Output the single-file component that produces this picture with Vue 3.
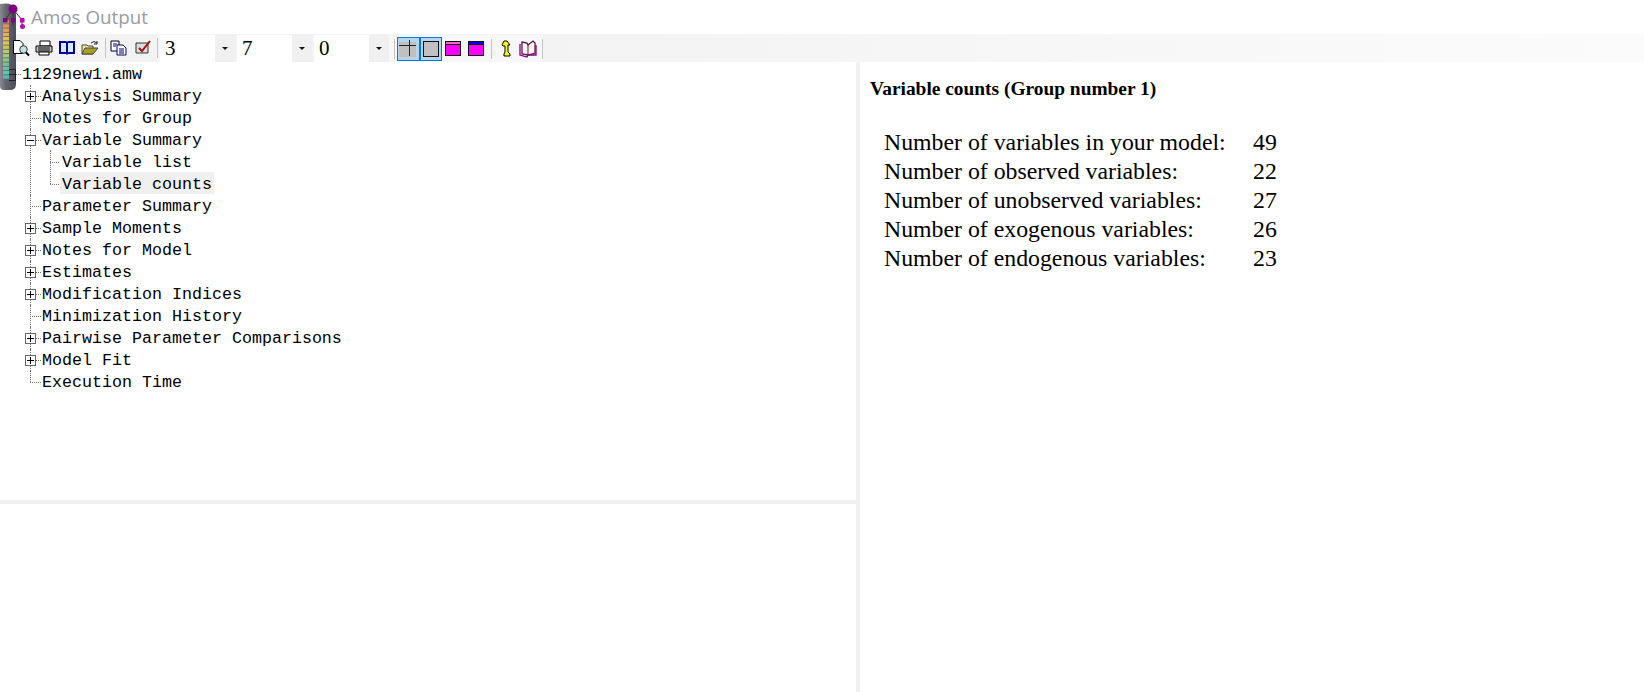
<script setup>
const rows = [
  { label: 'Analysis Summary', box: 'plus' },
  { label: 'Notes for Group' },
  { label: 'Variable Summary', box: 'minus', children: ['Variable list', 'Variable counts'] },
  { label: 'Parameter Summary' },
  { label: 'Sample Moments', box: 'plus' },
  { label: 'Notes for Model', box: 'plus' },
  { label: 'Estimates', box: 'plus' },
  { label: 'Modification Indices', box: 'plus' },
  { label: 'Minimization History' },
  { label: 'Pairwise Parameter Comparisons', box: 'plus' },
  { label: 'Model Fit', box: 'plus' },
  { label: 'Execution Time' }
]
const counts = [
  ['Number of variables in your model:', 49],
  ['Number of observed variables:', 22],
  ['Number of unobserved variables:', 27],
  ['Number of exogenous variables:', 26],
  ['Number of endogenous variables:', 23]
]
const leds = ['#d88a70','#e09060','#e8a050','#e8b050','#e0c050','#d8c850','#c8c850','#b8cc60','#a0cc70','#88cc80','#70c890','#60c8a0','#58c8b0','#50c0b0']
</script>

<template>
  <div class="page">
    <div class="logo">
      <svg width="30" height="92" viewBox="0 0 30 92">
        <defs>
          <linearGradient id="body" x1="0" x2="1" y1="0" y2="0">
            <stop offset="0" stop-color="#8a8a90"/>
            <stop offset=".35" stop-color="#666670"/>
            <stop offset="1" stop-color="#4c4c58"/>
          </linearGradient>
        </defs>
        <path d="M0 4 Q6 3 10 4 Q15 8 16 14 V84 Q16 90 10 90 H4 Q0 90 0 86 Z" fill="url(#body)"/>
        <rect v-for="(c, i) in leds" :key="i" x="3" :y="20 + i * 4.25" width="6" height="3.4" :fill="c"/>
        <path d="M13 9 L22 20 V26 M13 9 V26 M13 9 L5 20" stroke="#333" fill="none"/>
        <circle cx="13" cy="9" r="4.5" fill="#800080"/>
        <rect x="11" y="18" width="4.5" height="4.5" fill="#800080"/>
        <rect x="3" y="18" width="4.5" height="4.5" fill="#800080"/>
        <rect x="20" y="18" width="4.5" height="4.5" fill="#c000c0"/>
        <circle cx="22.5" cy="26.5" r="2.5" fill="#c000c0"/>
        <path d="M9 69.5 H15.5 V80.5 H9 M9 74.5 H15" fill="none" stroke="#222"/>
      </svg>
    </div>

    <div class="title">Amos Output</div>

    <div class="toolbar">
      <div class="group g1">
        <svg class="ic" viewBox="0 0 18 18"><path d="M1.5 1.5 H8 L11 4.5 V14.5 H1.5 Z" fill="#fff" stroke="#000"/><circle cx="11.5" cy="10.5" r="3.8" fill="#bfe4e4" stroke="#333"/><path d="M14 13.5 L17 16.5" stroke="#000" stroke-width="2"/></svg>
        <svg class="ic" viewBox="0 0 18 18"><path d="M5 2 H15 V7 H5Z" fill="#fff" stroke="#000"/><path d="M1 7 H17 V13 H1Z" fill="#c8c8c8" stroke="#000"/><path d="M4 13 H14 V16 H4Z" fill="#fff" stroke="#000"/><path d="M3 9 H15 M3 11 H15" stroke="#000"/></svg>
        <svg class="ic" viewBox="0 0 18 18"><path d="M1 2 H8 Q9 3 10 2 H17 V15 H10 L9 16 L8 15 H1Z" fill="#00009c"/><path d="M3 4 H8 V13 H3Z M10 4 H15 V13 H10Z" fill="#d8e8ff"/></svg>
        <svg class="ic" viewBox="0 0 18 18"><path d="M1 6 H6 L7 7 H12 V15 H1Z" fill="#ffe890" stroke="#444"/><path d="M1 15 L4 9 H17 L12 15Z" fill="#a8a020" stroke="#444"/><path d="M10 4 Q13 1 16 4 M16 2 V5 H13" fill="none" stroke="#222"/></svg>
        <i class="sep"></i>
        <svg class="ic" viewBox="0 0 18 18"><path d="M1 2 H9 V12 H1Z" fill="#fff" stroke="#000"/><path d="M7 6 H13 L16 9 V16 H7Z" fill="#fff" stroke="#00006c"/><path d="M9 10 H14 M9 12 H14 M9 14 H14 M3 5 H7 M3 7 H6" stroke="#00006c"/></svg>
        <svg class="ic chk" viewBox="0 0 18 18"><path d="M1 4 H13 V14 H1Z" fill="#ddd" stroke="#333"/><path d="M4 9 L7 12 L15 2" fill="none" stroke="#a01010" stroke-width="2"/></svg>
        <i class="sep sep2"></i>
      </div>
      <template v-for="v in [3, 7, 0]" :key="v">
        <div class="combo"><span>{{ v }}</span></div>
        <div class="drop"><i></i></div>
      </template>
      <div class="group g2">
        <i class="sep first"></i>
        <span class="btn on"><svg viewBox="0 0 18 18"><rect x="0" y="2" width="17" height="15" fill="#c0c0c0"/><path d="M0 5.5 H17 M10.5 0 V16" stroke="#222" stroke-width="1"/></svg></span>
        <span class="btn on"><svg viewBox="0 0 18 18"><rect x="1.5" y="1.5" width="15" height="15" fill="#c0c0c0" stroke="#111" stroke-width="1"/></svg></span>
        <svg class="ic mag" viewBox="0 0 16 15"><rect x=".5" y=".5" width="15" height="14" fill="#ff00ff" stroke="#111"/><rect x="1" y="1" width="14" height="2.5" fill="#ff66cc"/><path d="M1 3.5 H15" stroke="#111"/></svg>
        <svg class="ic mag" viewBox="0 0 16 15"><rect x=".5" y=".5" width="15" height="14" fill="#ff00ff" stroke="#111"/><rect x="1" y="1" width="14" height="2.5" fill="#0000ff"/><path d="M1 3.5 H15" stroke="#111"/></svg>
        <i class="sep"></i>
        <svg class="ic up" viewBox="0 0 18 18"><path d="M6 1 H9 L12 5 H10 V12 L12 14 V16 H6 V14 L7 12 V6 H5 L4 5 Z" fill="#ffff00" stroke="#000"/></svg>
        <svg class="ic book" viewBox="0 0 18 18"><path d="M3 2 L8 3 L9 5 L14 1 L16 3 V13 L9 15 L3 14 Z" fill="#fbf8e8" stroke="#601060" stroke-width="1.3"/><path d="M1 4 V15 L8 17 L9 15 L17 15 V5" fill="none" stroke="#800080" stroke-width="1.3"/><path d="M9 5 V15" stroke="#601060"/></svg>
        <i class="sep end"></i>
      </div>
    </div>

    <div class="panes">
      <div class="left">
        <div class="tree">
          <div class="root">1129new1.amw</div>
          <ul class="list">
            <li v-for="r in rows" :key="r.label" class="item">
              <div class="row">
                <i v-if="r.box" class="box" :class="r.box"></i>
                <span>{{ r.label }}</span>
              </div>
              <ul v-if="r.children" class="sub">
                <li v-for="(c, i) in r.children" :key="c" class="subitem">
                  <span :class="{ selected: i === 1 }">{{ c }}</span>
                </li>
              </ul>
            </li>
          </ul>
        </div>
        <div class="lower"></div>
      </div>
      <div class="right">
        <h1>Variable counts (Group number 1)</h1>
        <div class="table">
          <template v-for="c in counts" :key="c[0]">
            <span>{{ c[0] }}</span><span>{{ c[1] }}</span>
          </template>
        </div>
      </div>
    </div>
  </div>
</template>

<style scoped>
.page { position: relative; width: 1644px; height: 692px; background: #fff; overflow: hidden; display: flex; flex-direction: column; }
.logo { position: absolute; left: 0; top: 0; z-index: 3; line-height: 0; }
.title { height: 34px; padding: 6px 0 0 31px; box-sizing: border-box; font: 18.8px/22px "Open Sans", sans-serif; color: #9a9aa2; }
.toolbar { height: 28px; display: flex; align-items: stretch; background: linear-gradient(90deg, #f3f3f3, #f3f3f3 34%, #fbfbfb); padding-top: 1px; box-sizing: border-box; }
.group { display: flex; align-items: center; }
.g1 { width: 160px; padding: 0 0 2px 12px; box-sizing: border-box; gap: 5px; position: relative; z-index: 4; }
.ic { width: 18px; height: 18px; flex: none; }
.sep { width: 1px; height: 20px; background: #c4c4c4; flex: none; margin: 0 -1px 0 1px; }
.sep2 { margin-left: -1px; }
.chk { margin-left: 2px; }
.combo { width: 55px; background: #fff; font: 21px/26px "Liberation Serif", serif; color: #000; padding-left: 5px; box-sizing: border-box; }
.drop { width: 20px; background: #f0f0f0; display: flex; align-items: center; justify-content: center; margin-right: 2px; }
.drop i { width: 0; height: 0; border: 3px solid transparent; border-top: 3px solid #111; border-bottom: 0; }
.g2 { margin-left: -2px; padding-left: 5px; width: 154px; box-sizing: border-box; background: #f7f7f7; }
.first { margin: 0 2px 0 0; }
.btn { width: 23px; height: 24px; box-sizing: border-box; border: 1px solid transparent; display: flex; align-items: center; justify-content: center; }
.btn svg { width: 18px; height: 18px; }
.btn.on { background: #b5d5ee; border-color: #0078d7; }
.mag { width: 16px; height: 15px; margin-left: 3px; margin-right: 4px; }
.mag + .sep { margin: 0 0 0 3px; }
.up { margin: 0 0 0 6px; }
.book { margin-left: 3px; }
.end { margin: 0 0 0 5px; }
.panes { flex: 1; display: flex; min-height: 0; }
.left { width: 856px; display: flex; flex-direction: column; }
.tree { box-sizing: border-box; padding-top: 1px; border-bottom: 4px solid #f0f0f0; height: 442px; font: 16.67px/24px "Liberation Mono", monospace; color: #000; }
.root { height: 22px; padding-left: 22px; position: relative; }
.root::before { content: ""; position: absolute; left: 15px; top: 11px; width: 6px; border-top: 1px dotted #777; }
.list { list-style: none; margin: 0 0 0 30px; padding: 0; }
.item { position: relative; padding-left: 12px; }
.item::before { content: ""; position: absolute; left: 0; top: 0; height: 22px; border-left: 1px dotted #777; }
.item:last-child::before { height: 11px; }
.item:not(:last-child)::before { height: 100%; }
.row { height: 22px; position: relative; white-space: pre; }
.row::before { content: ""; position: absolute; left: -12px; top: 11px; width: 11px; border-top: 1px dotted #777; }
.box { position: absolute; z-index: 1; left: -17px; top: 6px; width: 11px; height: 11px; box-sizing: border-box; border: 1px solid #666; background: #fff; }
.box::before { content: ""; position: absolute; left: 1px; right: 1px; top: 4px; height: 1px; background: #000; }
.box.plus::after { content: ""; position: absolute; top: 1px; bottom: 1px; left: 4px; width: 1px; background: #000; }
.sub { list-style: none; margin: 0 0 0 8px; padding: 0; position: relative; }
.sub::before { content: ""; position: absolute; left: 0; top: -1px; height: 34px; border-left: 1px dotted #777; }
.subitem { height: 22px; padding-left: 12px; position: relative; white-space: pre; }
.subitem::before { content: ""; position: absolute; left: 0; top: 11px; width: 9px; border-top: 1px dotted #777; }
.selected { display: inline-block; vertical-align: top; height: 22px; line-height: 26px; margin-top: -1px; background: #f0f0f0; padding: 0 2px; margin-left: -2px; }
.lower { flex: 1; }
.right { flex: 1; border-left: 4px solid #f0f0f0; padding: 16px 0 0 10px; color: #000; font-family: "Liberation Serif", serif; }
h1 { margin: 0; font-size: 19.4px; line-height: 21px; font-weight: 700; }
.table { margin: 29px 0 0 14px; display: grid; grid-template-columns: 369px auto; grid-auto-rows: 29px; font-size: 23.8px; line-height: 29px; justify-content: start; }
</style>
